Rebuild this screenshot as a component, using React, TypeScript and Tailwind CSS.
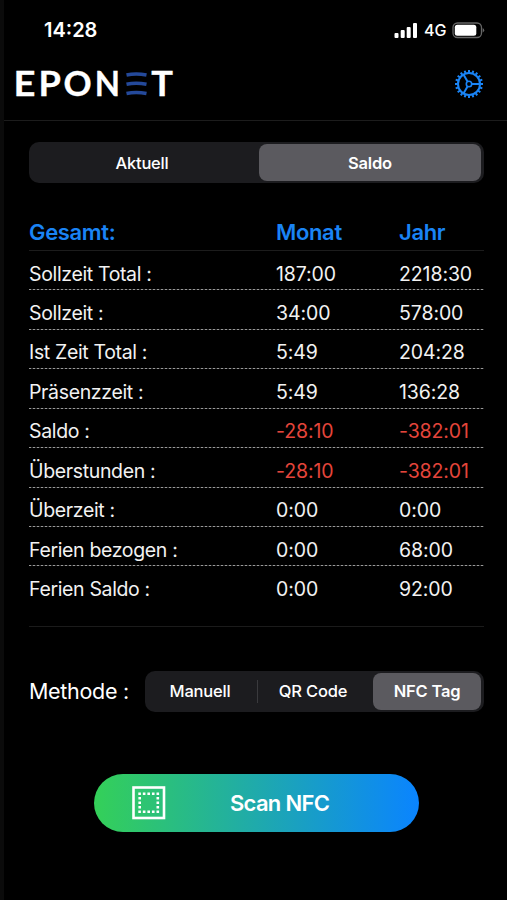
import clsx from "clsx";

const rows = [
  { label: "Sollzeit Total :", month: "187:00", year: "2218:30" },
  { label: "Sollzeit :", month: "34:00", year: "578:00" },
  { label: "Ist Zeit Total :", month: "5:49", year: "204:28" },
  { label: "Präsenzzeit :", month: "5:49", year: "136:28" },
  { label: "Saldo :", month: "-28:10", year: "-382:01" },
  { label: "Überstunden :", month: "-28:10", year: "-382:01" },
  { label: "Überzeit :", month: "0:00", year: "0:00" },
  { label: "Ferien bezogen :", month: "0:00", year: "68:00" },
  { label: "Ferien Saldo :", month: "0:00", year: "92:00" },
];

const StatusBar = () => (
  <div className="flex h-[60px] items-center justify-between pr-[22px] pl-[40px]">
    <span className="text-[20px] font-semibold">14:28</span>
    <div className="flex items-center">
      <svg width="24" height="17" viewBox="0 0 24 17" fill="#fff">
        <rect x="0.5" y="11" width="4" height="5" rx="1" />
        <rect x="6.7" y="8" width="4" height="8" rx="1" />
        <rect x="12.7" y="5" width="4" height="11" rx="1" />
        <rect x="19" y="1" width="4" height="15" rx="1" />
      </svg>
      <span className="ml-[6px] w-[22px] text-[16px] font-medium">4G</span>
      <svg className="ml-[6px]" width="33" height="17" viewBox="0 0 33 17">
        <rect
          x="1"
          y="1"
          width="28.5"
          height="14.5"
          rx="4.5"
          fill="none"
          stroke="#666"
          strokeWidth="1.3"
        />
        <rect x="2.8" y="2.8" width="21.5" height="11" rx="2.5" fill="#fff" />
        <path d="M30.7 6v4.5q1.5-.8 1.5-2.2T30.7 6" fill="#666" />
      </svg>
    </div>
  </div>
);

const logoLetters = [
  { letter: "E", x: -1.5, stretch: 1.14 },
  { letter: "P", x: 23.5, stretch: 1.08 },
  { letter: "O", x: 48.5, stretch: 1.04 },
  { letter: "N", x: 79.8, stretch: 0.98 },
  { letter: "T", x: 136.2, stretch: 1.08 },
];

const Logo = () => (
  <svg
    className="overflow-visible"
    width="160"
    height="36"
    viewBox="0 0 160 36"
    aria-label="EPONET"
  >
    {logoLetters.map(({ letter, x, stretch }) => (
      <text
        key={letter}
        transform={`translate(${x} 27.3) scale(${stretch} 1)`}
        fill="#fff"
        stroke="#fff"
        strokeWidth="0.3"
        className="font-['Lato'] text-[33.5px] font-bold"
      >
        {letter}
      </text>
    ))}
    <g fill="none" stroke="#24499a" strokeWidth="3.6">
      <path d="M111.500 6Q121 4 131.500 6" />
      <path d="M111.500 15.200Q121 13.200 131.500 15.200" />
      <path d="M111.500 24.500Q121 22.500 131.500 24.500" />
    </g>
  </svg>
);

const teeth = Array.from({ length: 20 }, (_, i) => i * 18);

const GearIcon = () => (
  <svg
    width="30"
    height="30"
    viewBox="-15 -15 30 30"
    fill="none"
    stroke="#1a84f5"
    strokeWidth="2"
  >
    <circle r="11" />
    {teeth.map((angle) => (
      <path key={angle} d="M11.500 0H14" transform={`rotate(${angle})`} />
    ))}
    <circle r="2.7" strokeWidth="1.6" />
    {[0, 120, 240].map((angle) => (
      <path key={angle} d="M3 0H11" transform={`rotate(${angle})`} />
    ))}
  </svg>
);

const Segment = ({
  label,
  active,
  className,
}: {
  label: string;
  active?: boolean;
  className?: string;
}) => (
  <button
    className={clsx(
      "flex h-[37px] items-center justify-center rounded-[8px] pt-px text-[16.5px] tracking-[-0.2px]",
      active ? "bg-[#5b5a5f] font-semibold" : "font-medium",
      className,
    )}
  >
    {label}
  </button>
);

const DottedLine = () => (
  <div className="h-px bg-[repeating-linear-gradient(90deg,#9a9a9a_0_2px,#2c2c2c_2px_4px)]" />
);

const Value = ({ children }: { children: string }) => (
  <span
    className={clsx(
      "tracking-[-0.1px]",
      children.startsWith("-") && "text-[#e4453b]",
    )}
  >
    {children}
  </span>
);

const BalanceTable = () => (
  <section className="mt-[31px] border-b border-[#1b1b1b] pb-[21px]">
    <div className="grid h-[37px] grid-cols-[247px_123px_1fr] items-center border-b border-[#1c1c1c] pt-px text-[22px] font-semibold tracking-[-0.35px] text-[#1a84f5]">
      <span>Gesamt:</span>
      <span>Monat</span>
      <span>Jahr</span>
    </div>
    {rows.map(({ label, month, year }, i) => (
      <div key={label}>
        {i > 0 && <DottedLine />}
        <div className="grid h-[38.43px] grid-cols-[247px_123px_1fr] items-center pt-[8px] text-[19.5px] text-[#f2f2f2]">
          <span className="tracking-[-0.35px]">{label}</span>
          <Value>{month}</Value>
          <Value>{year}</Value>
        </div>
      </div>
    ))}
  </section>
);

const NfcIcon = () => (
  <svg width="34" height="34" viewBox="0 0 34 34" fill="none" stroke="#fff">
    <rect x="1.5" y="1.5" width="30.5" height="30.5" strokeWidth="2.6" />
    <path
      d="M6.300 7.700H27.500M6.300 25.800H27.500M7.700 10.900V24M25.800 10.900V24"
      strokeWidth="2.6"
      strokeDasharray="2.6 1.95"
    />
  </svg>
);

export default function App() {
  return (
    <div className="h-[900px] w-[507px] overflow-hidden border-l-4 border-[#0b0b0b] bg-black font-['Inter',sans-serif] text-white">
      <StatusBar />
      <header className="flex h-[61px] items-start justify-between border-b border-[#1c1c1c] pt-[9px] pr-[23px] pl-[11px]">
        <Logo />
        <GearIcon />
      </header>

      <main className="flex flex-col pt-[21px] pr-[23px] pl-[25px]">
        <div className="flex h-[41px] items-center rounded-[10px] bg-[#1c1c1f] pr-[3px]">
          <Segment label="Aktuell" className="flex-1 pr-[4px]" />
          <Segment label="Saldo" active className="w-[222px]" />
        </div>

        <BalanceTable />

        <div className="mt-[44px] flex items-center justify-between">
          <span className="text-[21.5px] tracking-[-0.3px]">Methode :</span>
          <div className="flex h-[41px] w-[339px] items-center rounded-[10px] bg-[#1c1c1f] pr-[3px]">
            <Segment label="Manuell" className="flex-1 pr-[2px]" />
            <div className="h-[23px] w-px bg-[#3a3a3d]" />
            <Segment label="QR Code" className="w-[115px] pr-[5px]" />
            <Segment label="NFC Tag" active className="w-[108px]" />
          </div>
        </div>

        <button className="mt-[62px] ml-[65px] flex h-[58px] w-[325px] items-center rounded-full bg-linear-to-r/srgb from-[#34d058] to-[#0a84ff] pl-[38px] text-[22px] font-semibold tracking-[-0.7px]">
          <NfcIcon />
          <span className="ml-[64px] pt-px">Scan NFC</span>
        </button>
      </main>
    </div>
  );
}
